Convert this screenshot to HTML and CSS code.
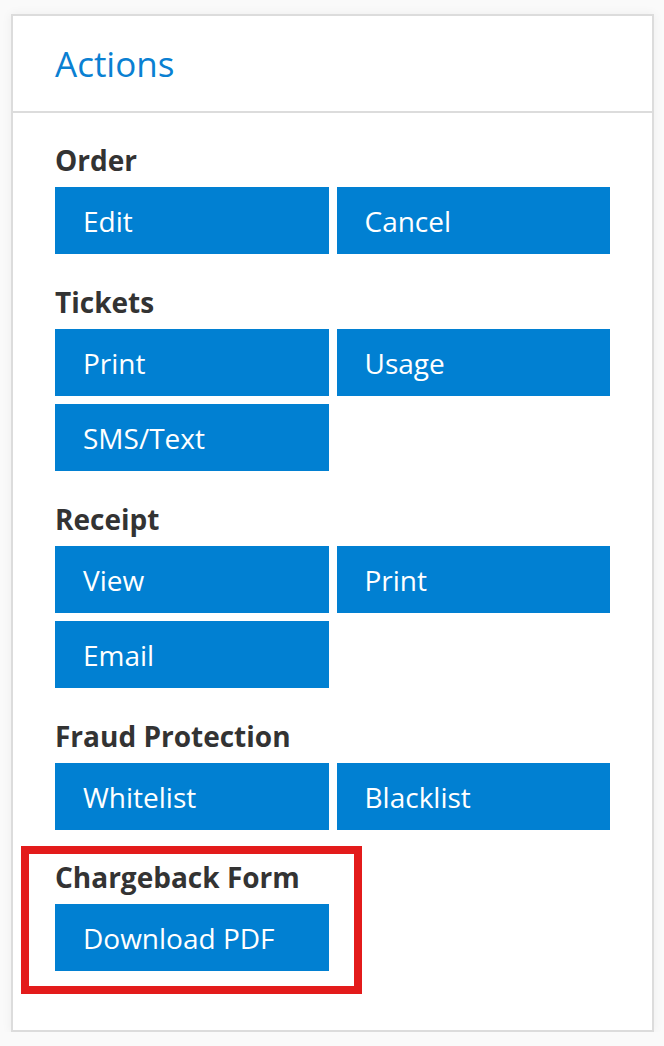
FILE: index.html
```html
<!DOCTYPE html>
<html lang="en">
<head>
    <meta charset="UTF-8">
    <meta name="viewport" content="width=device-width, initial-scale=1.0">
    <title>Order Actions</title>
    <link rel="stylesheet" href="styles.css">
</head>
<body>
    <div class="panel">
        <div class="panel-header">Actions</div>

        <div class="panel-body">
            <div class="action-group">
                <h3>Order</h3>
                <div class="buttons">
                    <button>Edit</button>
                    <button>Cancel</button>
                </div>
            </div>

            <div class="action-group">
                <h3>Tickets</h3>
                <div class="buttons">
                    <button>Print</button>
                    <button>Usage</button>
                    <button>SMS/Text</button>
                </div>
            </div>

            <div class="action-group">
                <h3>Receipt</h3>
                <div class="buttons">
                    <button>View</button>
                    <button>Print</button>
                    <button>Email</button>
                </div>
            </div>

            <div class="action-group">
                <h3>Fraud Protection</h3>
                <div class="buttons">
                    <button>Whitelist</button>
                    <button>Blacklist</button>
                </div>
            </div>

            <div class="action-group highlighted">
                <h3>Chargeback Form</h3>
                <div class="buttons">
                    <button>Download PDF</button>
                </div>
                <div class="highlight-box"></div>
            </div>
        </div>
    </div>
</body>
</html>
```

FILE: styles.css
```css
body {
    font-family: 'Open Sans', sans-serif;
    margin: 0;
    padding: 14px 10px 0 11px;
    background: #fafafa;
}

.panel {
    background: white;
    border: 2px solid #dcdcdc;
    box-shadow: 0 0 10px rgba(0,0,0,0.06);
    height: 1014px;
    box-sizing: content-box;
}

.panel-header {
    color: #0a80d2;
    font-size: 35px;
    line-height: 95px;
    padding: 0 42px;
    border-bottom: 2px solid #dcdcdc;
}

.panel-body {
    padding: 30px 42px 60px;
}

.action-group + .action-group {
    margin-top: 31px;
}

.action-group h3 {
    color: #333;
    font-size: 28px;
    font-weight: 700;
    line-height: 34px;
    margin: 0 0 10px;
}

.buttons {
    display: grid;
    grid-template-columns: 1fr 1fr;
    gap: 8px;
}

button {
    background: #0180d2;
    color: white;
    border: none;
    height: 67px;
    padding: 0 28px;
    text-align: left;
    font-family: 'Open Sans', sans-serif;
    font-size: 28px;
    cursor: pointer;
}

.action-group.highlighted {
    position: relative;
    margin-top: 30px;
}

.highlight-box {
    position: absolute;
    left: -34px;
    top: -14px;
    width: 341px;
    height: 148px;
    box-sizing: border-box;
    border: 8px solid #e31b1b;
}
```
